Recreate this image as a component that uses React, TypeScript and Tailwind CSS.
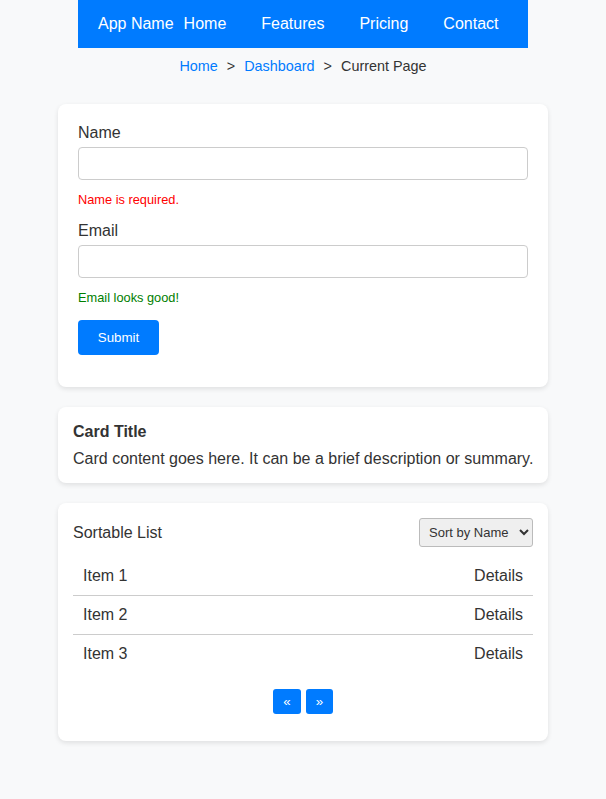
import React from "react";

export default function App() {
  const items = ["Item 1", "Item 2", "Item 3"];
  return (
    <div className="min-h-[799px] bg-[#f8f9fa] text-[#333] font-['Liberation_Sans',Arial,sans-serif] text-[16px]">
      <nav className="mx-auto w-[450px] h-12 bg-[#007bff] text-white flex items-center pl-5">
        <span className="mr-[10px]">App Name</span>
        <div className="flex gap-[35px]">
          <a>Home</a>
          <a>Features</a>
          <a>Pricing</a>
          <a>Contact</a>
        </div>
      </nav>
      <div className="flex justify-center items-center pt-[10px] text-[14.4px] leading-[16px]">
        <a className="text-[#007bff]">Home</a>
        <span className="px-[9px]">&gt;</span>
        <a className="text-[#007bff]">Dashboard</a>
        <span className="px-[9px]">&gt;</span>
        <span>Current Page</span>
      </div>

      <div className="mx-auto w-[490px] mt-[30px] flex flex-col gap-5">
        <div className="bg-white rounded-lg shadow-[0_2px_5px_rgba(0,0,0,0.1)] px-5 pt-5 pb-[32px]">
          <label className="block leading-[18px] mb-[5px]">Name</label>
          <input className="block w-full h-[33px] border border-[#ccc] rounded-[4px] px-2" />
          <div className="mt-[12px] text-[12.8px] leading-[15px] text-[#ff0000]">Name is required.</div>
          <label className="block leading-[18px] mb-[5px] mt-[15px]">Email</label>
          <input className="block w-full h-[33px] border border-[#ccc] rounded-[4px] px-2" />
          <div className="mt-[12px] text-[12.8px] leading-[15px] text-[#008000]">Email looks good!</div>
          <button className="mt-[15px] h-[35px] w-[81px] bg-[#007bff] text-white text-[13.33px] rounded-[4px]">
            Submit
          </button>
        </div>

        <div className="bg-white rounded-lg shadow-[0_2px_5px_rgba(0,0,0,0.1)] px-[15px] pt-[16px] pb-[15px]">
          <div className="font-bold leading-[18px]">Card Title</div>
          <p className="mt-[9px] leading-[18px] whitespace-nowrap">
            Card content goes here. It can be a brief description or summary.
          </p>
        </div>

        <div className="bg-white rounded-lg shadow-[0_2px_5px_rgba(0,0,0,0.1)] px-[15px] pt-[15px] pb-[27px]">
          <div className="flex justify-between items-center h-[29px]">
            <span>Sortable List</span>
            <select className="h-[29px] w-[114px] text-[13px] bg-[#efefef] border border-[#bbb] rounded-[3px] pl-[5px] pr-[2px]">
              <option>Sort by Name</option>
            </select>
          </div>
          <ul className="mt-[10px]">
            {items.map((it, i) => (
              <li
                key={it}
                className={
                  "flex justify-between px-[10px] py-[10px] leading-[18px] " +
                  (i < items.length - 1 ? "border-b border-[#ccc]" : "")
                }
              >
                <span>{it}</span>
                <span>Details</span>
              </li>
            ))}
          </ul>
          <div className="flex justify-center gap-[5px] mt-[16px]">
            <button className="h-[25px] w-[28px] bg-[#007bff] text-white text-[13.33px] rounded-[3px]">«</button>
            <button className="h-[25px] w-[27px] bg-[#007bff] text-white text-[13.33px] rounded-[3px]">»</button>
          </div>
        </div>
      </div>
    </div>
  );
}
